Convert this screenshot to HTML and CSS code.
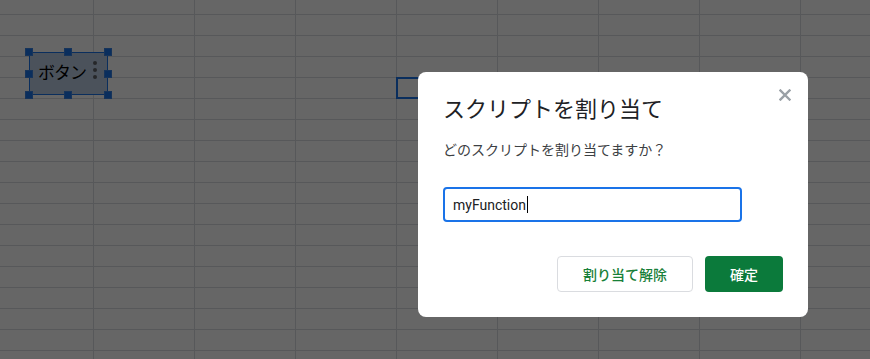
FILE: index.html
```html
<!DOCTYPE html>
<html lang="ja">
<head>
  <meta charset="UTF-8">
  <meta name="viewport" content="width=device-width, initial-scale=1.0">
  <title>スクリプトを割り当て</title>
  <link rel="stylesheet" href="styles.css">
</head>
<body>
  <div class="sheet">
    <div class="selected-cell"></div>

    <div class="drawing">
      <span class="drawing-label">ボタン</span>
      <span class="drawing-menu"><i></i><i></i><i></i></span>
      <span class="handle h-tl"></span>
      <span class="handle h-tc"></span>
      <span class="handle h-tr"></span>
      <span class="handle h-ml"></span>
      <span class="handle h-mr"></span>
      <span class="handle h-bl"></span>
      <span class="handle h-bc"></span>
      <span class="handle h-br"></span>
    </div>
  </div>

  <div class="backdrop"></div>

  <div class="dialog">
    <button class="close" aria-label="閉じる">
      <svg width="12" height="12" viewBox="0 0 12 12">
        <path d="M1.5 1.5 L10.5 10.5 M10.5 1.5 L1.5 10.5" stroke="#9aa0a6" stroke-width="2.4" stroke-linecap="square"/>
      </svg>
    </button>
    <h2 class="dialog-title">スクリプトを割り当て</h2>
    <p class="dialog-text">どのスクリプトを割り当てますか？</p>
    <div class="field">myFunction<span class="caret"></span></div>
    <div class="actions">
      <button class="btn btn-outline">割り当て解除</button>
      <button class="btn btn-primary">確定</button>
    </div>
  </div>
</body>
</html>
```

FILE: styles.css
```css
/* Base */
body {
  margin: 0;
  font-family: Roboto, "Noto Sans CJK JP", sans-serif;
  background-color: #fff;
  overflow: hidden;
}

/* Sheet grid: one tile per cell, 101 x 21 */
.sheet {
  position: relative;
  width: 870px;
  height: 359px;
  background-color: #fff;
  background-image:
    linear-gradient(to right, #dadce0 1px, transparent 1px),
    linear-gradient(to bottom, #dadce0 1px, transparent 1px);
  background-size: 101px 21px;
  background-position: 93px 14px;
}

.selected-cell {
  position: absolute;
  left: 396px;
  top: 77px;
  width: 101px;
  height: 22px;
  box-sizing: border-box;
  border: 2px solid #1a73e8;
}

/* Drawing "button" */
.drawing {
  position: absolute;
  left: 29px;
  top: 52px;
  width: 79px;
  height: 43px;
  box-sizing: border-box;
  border: 1px solid #1a73e8;
  background-color: #bccee3;
  display: flex;
  align-items: center;
  padding-left: 8px;
}

.drawing-label {
  font-size: 17px;
  letter-spacing: -1px;
  color: #000;
  line-height: 1;
}

.drawing-menu {
  position: absolute;
  left: 63px;
  top: 8px;
  display: flex;
  flex-direction: column;
  gap: 3px;
}

.drawing-menu i {
  width: 4px;
  height: 4px;
  border-radius: 50%;
  background-color: #5f6368;
}

.handle {
  position: absolute;
  width: 8px;
  height: 8px;
  box-sizing: border-box;
  background-color: #1a73e8;
  border: 1px solid #3b82e0;
}

.h-tl { left: -5px; top: -5px; }
.h-tc { left: 34px; top: -5px; }
.h-tr { right: -5px; top: -5px; }
.h-ml { left: -5px; top: 17px; }
.h-mr { right: -5px; top: 17px; }
.h-bl { left: -5px; bottom: -5px; }
.h-bc { left: 34px; bottom: -5px; }
.h-br { right: -5px; bottom: -5px; }

/* Modal */
.backdrop {
  position: fixed;
  inset: 0;
  background-color: rgba(0, 0, 0, 0.6);
}

.dialog {
  position: fixed;
  left: 418px;
  top: 72px;
  width: 390px;
  height: 245px;
  box-sizing: border-box;
  padding: 22px 25px 25px 25px;
  background-color: #fff;
  border-radius: 8px;
  display: flex;
  flex-direction: column;
}

.close {
  position: absolute;
  top: 17px;
  right: 17px;
  padding: 0;
  border: none;
  background: none;
  width: 12px;
  height: 12px;
  cursor: pointer;
}

.close svg {
  display: block;
}

.dialog-title {
  margin: 0;
  font-size: 22px;
  font-weight: 400;
  line-height: 32px;
  color: #202124;
}

.dialog-text {
  margin: 14px 0 0 0;
  font-size: 14px;
  line-height: 20px;
  color: #3c4043;
}

.field {
  margin-top: 27px;
  width: 299px;
  height: 35px;
  box-sizing: border-box;
  border: 2px solid #1a73e8;
  border-radius: 4px;
  padding-left: 8px;
  display: flex;
  align-items: center;
  font-size: 14px;
  color: #202124;
}

.caret {
  display: inline-block;
  width: 1px;
  height: 17px;
  margin-left: 1px;
  background-color: #000;
}

.actions {
  margin-top: auto;
  display: flex;
  justify-content: flex-end;
  gap: 12px;
}

.btn {
  height: 36px;
  box-sizing: border-box;
  border-radius: 4px;
  font-family: Roboto, "Noto Sans CJK JP", sans-serif;
  font-size: 14px;
  font-weight: 500;
  cursor: pointer;
}

.btn-outline {
  width: 136px;
  background-color: #fff;
  border: 1px solid #dadce0;
  color: #188038;
}

.btn-primary {
  width: 78px;
  background-color: #0b7a3b;
  border: none;
  color: #fff;
}
```
